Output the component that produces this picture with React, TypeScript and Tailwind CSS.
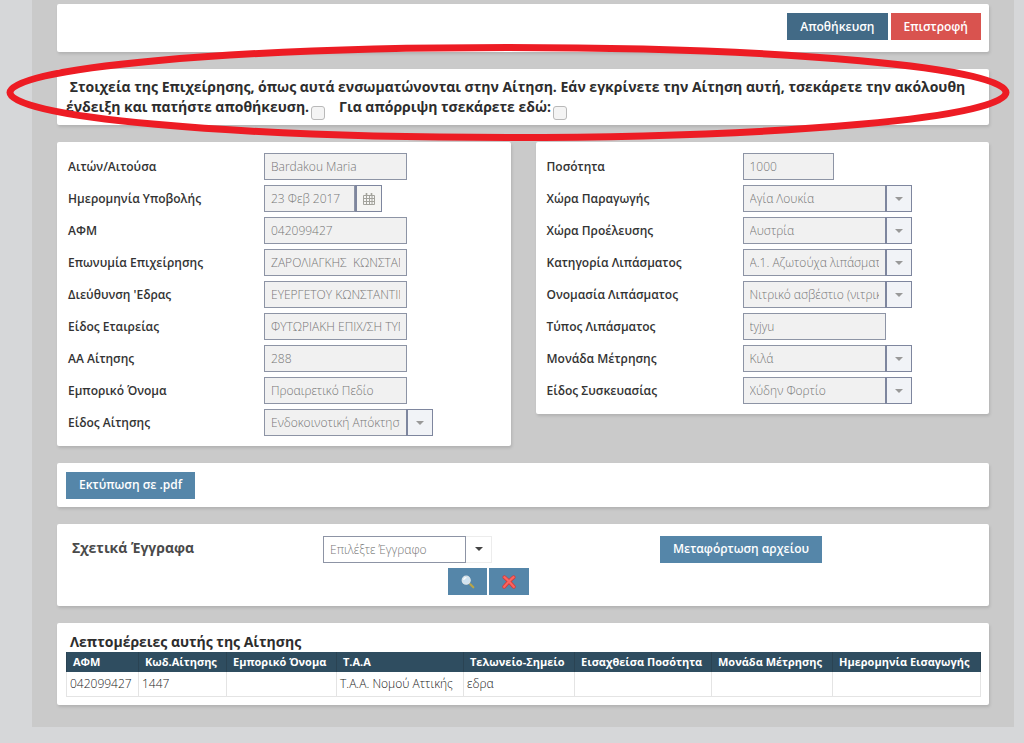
import React from 'react';
import clsx from 'clsx';

type FieldType = 'text' | 'short' | 'date' | 'select';

interface Field {
  id: string;
  label: string;
  value: string;
  type: FieldType;
}

const companyFields: Field[] = [
  { id: 'applicant', label: 'Αιτών/Αιτούσα', value: 'Bardakou Maria', type: 'text' },
  { id: 'submitted', label: 'Ημερομηνία Υποβολής', value: '23 Φεβ 2017', type: 'date' },
  { id: 'afm', label: 'ΑΦΜ', value: '042099427', type: 'text' },
  { id: 'company', label: 'Επωνυμία Επιχείρησης', value: 'ΖΑΡΟΛΙΑΓΚΗΣ  ΚΩΝΣΤΑΝΤΙΝΟΣ', type: 'text' },
  { id: 'address', label: "Διεύθυνση 'Εδρας", value: 'ΕΥΕΡΓΕΤΟΥ ΚΩΝΣΤΑΝΤΙΝΟΥ', type: 'text' },
  { id: 'companyType', label: 'Είδος Εταιρείας', value: 'ΦΥΤΩΡΙΑΚΗ ΕΠΙΧ/ΣΗ ΤΥΠΟΥ', type: 'text' },
  { id: 'number', label: 'ΑΑ Αίτησης', value: '288', type: 'text' },
  { id: 'brand', label: 'Εμπορικό Όνομα', value: 'Προαιρετικό Πεδίο', type: 'text' },
  { id: 'kind', label: 'Είδος Αίτησης', value: 'Ενδοκοινοτική Απόκτηση', type: 'select' },
];

const productFields: Field[] = [
  { id: 'quantity', label: 'Ποσότητα', value: '1000', type: 'short' },
  { id: 'madeIn', label: 'Χώρα Παραγωγής', value: 'Αγία Λουκία', type: 'select' },
  { id: 'origin', label: 'Χώρα Προέλευσης', value: 'Αυστρία', type: 'select' },
  { id: 'category', label: 'Κατηγορία Λιπάσματος', value: 'Α.1. Αζωτούχα λιπάσματα', type: 'select' },
  { id: 'name', label: 'Ονομασία Λιπάσματος', value: 'Νιτρικό ασβέστιο (νιτρικό)', type: 'select' },
  { id: 'type', label: 'Τύπος Λιπάσματος', value: 'tyjyu', type: 'text' },
  { id: 'unit', label: 'Μονάδα Μέτρησης', value: 'Κιλά', type: 'select' },
  { id: 'packing', label: 'Είδος Συσκευασίας', value: 'Χύδην Φορτίο', type: 'select' },
];

const columns = [
  { title: 'ΑΦΜ', value: '042099427', width: 'w-[72px]' },
  { title: 'Κωδ.Αίτησης', value: '1447', width: 'w-[88px]' },
  { title: 'Εμπορικό Όνομα', value: '', width: 'w-[110px]' },
  { title: 'Τ.Α.Α', value: 'Τ.Α.Α. Νομού Αττικής', width: 'w-[127px]' },
  { title: 'Τελωνείο-Σημείο', value: 'εδρα', width: 'w-[111px]' },
  { title: 'Εισαχθείσα Ποσότητα', value: '', width: 'w-[137px]' },
  { title: 'Μονάδα Μέτρησης', value: '', width: 'w-[121px]' },
  { title: 'Ημερομηνία Εισαγωγής', value: '', width: 'w-[148px]' },
];

const Card: React.FC<{ className?: string; children: React.ReactNode }> = ({ className, children }) => (
  <section className={clsx('rounded-xs bg-white shadow-[1px_2px_3px_rgba(0,0,0,0.12)]', className)}>
    {children}
  </section>
);

const Caret = ({ className }: { className: string }) => (
  <svg viewBox="0 0 8 4" className={clsx('h-1 w-2', className)} fill="currentColor" aria-hidden="true">
    <path d="M0 0h8L4 4z" />
  </svg>
);

const CalendarIcon = () => (
  <svg viewBox="0 0 12 12" className="h-3 w-3 text-[#a3a39c]" fill="none" stroke="currentColor" aria-hidden="true">
    <path d="M.5 2.5h11v9H.5zM.5 5.5h11M.5 8.5h11M3.5 3v9M6.5 3v9M9 3v9" />
    <path d="M3.5 0v3M8.5 0v3" strokeWidth="1.6" />
  </svg>
);

const SearchIcon = () => (
  <svg viewBox="0 0 14 14" className="h-[14px] w-[14px]" aria-hidden="true">
    <path d="M8 8l1.5 1.5" stroke="#6f7b85" strokeWidth="1.6" />
    <path d="M9.3 9.3l3 3" stroke="#b9a648" strokeWidth="2.2" strokeLinecap="round" />
    <circle cx="5.2" cy="5.2" r="4" fill="#cfe3f1" stroke="#dbe3e8" strokeWidth="1.2" />
    <path d="M2.8 5a2.5 2.5 0 012.6-2.4" stroke="#fff" strokeWidth="1.2" fill="none" />
  </svg>
);

const DeleteIcon = () => (
  <svg viewBox="0 0 14 14" className="h-[14px] w-[14px]" fill="none" strokeLinecap="round" aria-hidden="true">
    <path d="M2.4 2.2Q7 6 11.8 11.8M11.6 2.2Q7 6 2.2 11.8" stroke="#d63a38" strokeWidth="3.8" />
    <path d="M2.4 2.2Q7 6 11.8 11.8M11.6 2.2Q7 6 2.2 11.8" stroke="#fa6560" strokeWidth="2.2" />
  </svg>
);

const inputStyle = 'h-[27px] border border-[#8d94a5] bg-[#f1f1f1] px-1.5 text-xs font-light text-[#777]';

const FieldControl = ({ id, value, type }: Field) => {
  if (type === 'select') {
    return (
      <div className="relative w-[169px]">
        <select id={id} disabled className={clsx(inputStyle, 'w-full appearance-none pr-8 opacity-100')}>
          <option>{value}</option>
        </select>
        <span className="pointer-events-none absolute inset-y-0 right-0 flex w-[27px] items-center justify-center border border-l-2 border-[#7e869e] bg-[#f1f3f7]">
          <Caret className="text-[#999]" />
        </span>
      </div>
    );
  }

  if (type === 'date') {
    return (
      <div className="flex">
        <input id={id} disabled defaultValue={value} className={clsx(inputStyle, 'w-[91px]')} />
        <button
          type="button"
          disabled
          aria-label="Ημερολόγιο"
          className="flex w-[27px] items-center justify-center border border-l-2 border-[#7e869e] bg-[#f5f5f3]"
        >
          <CalendarIcon />
        </button>
      </div>
    );
  }

  return (
    <input
      id={id}
      disabled
      defaultValue={value}
      className={clsx(inputStyle, type === 'short' ? 'w-[91px]' : 'w-[143px]')}
    />
  );
};

const FieldList = ({ fields }: { fields: Field[] }) => (
  <div className="flex flex-col gap-[5px]">
    {fields.map((field) => (
      <div key={field.id} className="flex h-[27px] items-center">
        <label htmlFor={field.id} className="w-[196px] shrink-0 text-xs font-semibold text-[#333]">
          {field.label}
        </label>
        <FieldControl {...field} />
      </div>
    ))}
  </div>
);

const checkboxStyle =
  'ml-0.5 h-[14px] w-[14px] appearance-none rounded-[3px] border border-[#b9b9b9] bg-[#f4f4f4] align-[-8px]';

const App: React.FC = () => {
  const buttonStyle = 'h-[27px] px-[13px] text-xs font-semibold text-white';

  return (
    <div className="min-h-screen overflow-x-hidden bg-[#d6d7d9] pr-2.5 pb-4 pl-8 font-['Open_Sans',sans-serif]">
      <main className="flex flex-col gap-[17px] bg-[#cacaca] px-[25px] pt-1 pb-[22px]">
        <Card className="flex justify-end gap-[3px] px-2 pt-[9px] pb-3">
          <button type="button" className={clsx(buttonStyle, 'bg-[#426a86]')}>Αποθήκευση</button>
          <button type="button" className={clsx(buttonStyle, 'bg-[#d9534f]')}>Επιστροφή</button>
        </Card>

        <Card className="relative px-[9px] pt-2 pb-[5px]">
          <p className="text-sm leading-5 font-bold text-[#2d2d2d]">
            &nbsp;Στοιχεία της Επιχείρησης, όπως αυτά ενσωματώνονται στην Αίτηση. Εάν εγκρίνετε την Αίτηση αυτή, τσεκάρετε την ακόλουθη{' '}
            <label htmlFor="approve">ένδειξη και πατήστε αποθήκευση.</label>
            <input id="approve" type="checkbox" className={clsx(checkboxStyle, 'mr-[14px]')} />
            <label htmlFor="reject">Για απόρριψη τσεκάρετε εδώ:</label>
            <input id="reject" type="checkbox" className={checkboxStyle} />
          </p>
          {/* red marker round the notice */}
          <div className="pointer-events-none absolute -top-[25px] -right-[21px] -bottom-4 -left-[51px]">
            <svg viewBox="0 0 1004 97" preserveAspectRatio="none" className="h-full w-full" fill="none" aria-hidden="true">
              <ellipse cx="502" cy="48.5" rx="498" ry="45" stroke="#ed1c24" strokeWidth="7" />
            </svg>
          </div>
        </Card>

        <div className="grid grid-cols-2 items-start gap-[25px]">
          <Card className="px-[11px] pt-[11px] pb-[10px]">
            <FieldList fields={companyFields} />
          </Card>
          <Card className="px-[11px] pt-[11px] pb-[10px]">
            <FieldList fields={productFields} />
          </Card>
        </div>

        <Card className="px-[9px] pt-2 pb-2">
          <button type="button" className={clsx(buttonStyle, 'bg-[#5586a9]')}>Εκτύπωση σε .pdf</button>
        </Card>

        <Card className="flex items-start px-[15px] pt-3 pb-[11px]">
          <label htmlFor="document" className="w-[251px] text-sm leading-6 font-bold text-[#4a4a4a]">
            Σχετικά Έγγραφα
          </label>
          <div className="flex w-[337px] flex-col gap-[5px]">
            <div className="relative w-[169px]">
              <select
                id="document"
                className="h-[27px] w-[143px] appearance-none border border-[#8d94a5] bg-white px-1.5 text-xs font-light text-[#777]"
              >
                <option>Επιλέξτε Έγγραφο</option>
              </select>
              <span className="pointer-events-none absolute inset-y-0 right-0 flex w-[26px] items-center justify-center border border-l-0 border-[#ececec]">
                <Caret className="text-[#444]" />
              </span>
            </div>
            <div className="ml-[125px] flex gap-0.5">
              <button type="button" aria-label="Προβολή" className="flex h-[27px] w-[39px] items-center justify-center bg-[#5586a9]">
                <SearchIcon />
              </button>
              <button type="button" aria-label="Διαγραφή" className="flex h-[27px] w-10 items-center justify-center bg-[#5586a9]">
                <DeleteIcon />
              </button>
            </div>
          </div>
          <button type="button" className={clsx(buttonStyle, 'bg-[#5586a9]')}>Μεταφόρτωση αρχείου</button>
        </Card>

        <Card className="px-[9px] pt-[9px] pb-2">
          <h2 className="pl-1 text-sm leading-5 font-bold text-[#2d2d2d]">Λεπτομέρειες αυτής της Αίτησης</h2>
          <table className="w-full table-fixed border-collapse text-left whitespace-nowrap">
            <thead>
              <tr className="h-5 bg-[#2f4d60] text-[11px] leading-4 text-white">
                {columns.map((column) => (
                  <th key={column.title} className={clsx(column.width, 'border-x border-[#2a4353] px-1.5 font-bold')}>
                    {column.title}
                  </th>
                ))}
              </tr>
            </thead>
            <tbody>
              <tr className="h-6 text-xs font-light text-[#222]">
                {columns.map((column) => (
                  <td key={column.title} className="border border-t-0 border-[#e4e4e4] px-[3px]">
                    {column.value}
                  </td>
                ))}
              </tr>
            </tbody>
          </table>
        </Card>
      </main>
    </div>
  );
};

export default App;
